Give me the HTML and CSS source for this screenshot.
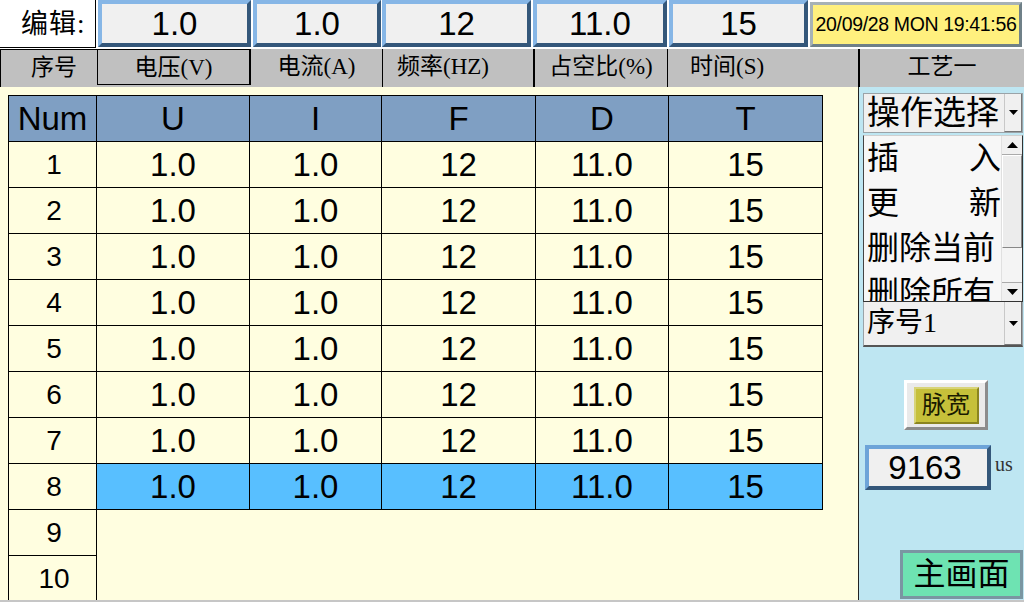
FILE: index.html
```html
<!DOCTYPE html>
<html lang="zh-CN">
<head>
<meta charset="utf-8">
<title>工艺编辑</title>
<link rel="stylesheet" href="styles.css">
</head>
<body>
<div class="screen">
  <div class="topbar">
    <div class="edit-label">编辑:</div>
    <div class="val-box vb1">1.0</div>
    <div class="val-box vb2">1.0</div>
    <div class="val-box vb3">12</div>
    <div class="val-box vb4">11.0</div>
    <div class="val-box vb5">15</div>
    <div class="clock">20/09/28 MON 19:41:56</div>
  </div>
  <div class="headbar">
    <div class="hcell h-seq">序号</div>
    <div class="hcell h-u">电压(V)</div>
    <div class="hcell h-i">电流(A)</div>
    <div class="hcell h-f">频率(HZ)</div>
    <div class="hcell h-d">占空比(%)</div>
    <div class="hcell h-t">时间(S)</div>
    <div class="hcell h-proc">工艺一</div>
  </div>
  <div class="main">
    <section class="panel">
      <table class="grid">
        <colgroup>
          <col class="c-num"><col class="c-u"><col class="c-i"><col class="c-f"><col class="c-d"><col class="c-t">
        </colgroup>
        <thead>
          <tr><th class="num-h">Num</th><th>U</th><th>I</th><th>F</th><th>D</th><th>T</th></tr>
        </thead>
        <tbody>
          <tr><td class="num">1</td><td>1.0</td><td>1.0</td><td>12</td><td>11.0</td><td>15</td></tr>
          <tr><td class="num">2</td><td>1.0</td><td>1.0</td><td>12</td><td>11.0</td><td>15</td></tr>
          <tr><td class="num">3</td><td>1.0</td><td>1.0</td><td>12</td><td>11.0</td><td>15</td></tr>
          <tr><td class="num">4</td><td>1.0</td><td>1.0</td><td>12</td><td>11.0</td><td>15</td></tr>
          <tr><td class="num">5</td><td>1.0</td><td>1.0</td><td>12</td><td>11.0</td><td>15</td></tr>
          <tr><td class="num">6</td><td>1.0</td><td>1.0</td><td>12</td><td>11.0</td><td>15</td></tr>
          <tr><td class="num">7</td><td>1.0</td><td>1.0</td><td>12</td><td>11.0</td><td>15</td></tr>
          <tr class="sel"><td class="num">8</td><td>1.0</td><td>1.0</td><td>12</td><td>11.0</td><td>15</td></tr>
          <tr><td class="num">9</td><td class="void"></td><td class="void"></td><td class="void"></td><td class="void"></td><td class="void"></td></tr>
          <tr><td class="num">10</td><td class="void"></td><td class="void"></td><td class="void"></td><td class="void"></td><td class="void"></td></tr>
        </tbody>
      </table>
    </section>
    <aside class="side">
      <div class="combo combo-op">
        <span class="combo-text">操作选择</span>
        <span class="drop-btn"><svg width="9" height="5" viewBox="0 0 9 5"><polygon points="0,0 9,0 4.5,5" fill="#000"/></svg></span>
      </div>
      <div class="listbox">
        <ul class="items">
          <li><span>插</span><span>入</span></li>
          <li><span>更</span><span>新</span></li>
          <li><span>删除当前</span></li>
          <li class="clipped"><span>删除所有</span></li>
        </ul>
        <div class="vscroll">
          <div class="sb-btn"><svg width="11" height="6" viewBox="0 0 11 6"><polygon points="0,6 11,6 5.5,0" fill="#000"/></svg></div>
          <div class="sb-thumb"></div>
          <div class="sb-track"></div>
          <div class="sb-btn"><svg width="11" height="6" viewBox="0 0 11 6"><polygon points="0,0 11,0 5.5,6" fill="#000"/></svg></div>
        </div>
      </div>
      <div class="combo combo-seq">
        <span class="combo-text">序号1</span>
        <span class="drop-btn"><svg width="9" height="5" viewBox="0 0 9 5"><polygon points="0,0 9,0 4.5,5" fill="#000"/></svg></span>
      </div>
      <div class="pulse-frame"><div class="pulse-btn">脉宽</div></div>
      <div class="pw-row">
        <div class="pw-input">9163</div>
        <span class="unit">us</span>
      </div>
      <div class="home-btn">主画面</div>
    </aside>
  </div>
</div>
</body>
</html>
```
FILE: styles.css
```css
html, body {
  margin: 0;
  padding: 0;
}
body {
  width: 1024px;
  height: 602px;
  overflow: hidden;
  background: #c6c6c6;
  font-family: "Liberation Sans", Arial, sans-serif;
  color: #000;
}
.screen {
  width: 1024px;
  height: 600px;
  display: flex;
  flex-direction: column;
  background: #ffffff;
}

/* ---------- top bar ---------- */
.topbar {
  display: flex;
  align-items: flex-start;
  height: 49px;
  background: #ffffff;
}
.edit-label {
  width: 96px;
  height: 48px;
  box-sizing: border-box;
  border-right: 1px solid #000;
  border-bottom: 1px solid #000;
  padding-left: 21px;
  font-family: "Liberation Serif", "Noto Sans CJK SC", serif;
  font-size: 27px;
  line-height: 48px;
  letter-spacing: 1px;
}
.val-box {
  height: 47px;
  box-sizing: border-box;
  border: 4px solid;
  border-color: #86b6e6 #34577a #34577a #86b6e6;
  background: #f0f0f0;
  font-size: 33px;
  line-height: 39px;
  text-align: center;
}
.vb1 { width: 153px; margin-left: 2px; }
.vb2 { width: 128px; margin-left: 2px; }
.vb3 { width: 149px; margin-left: 1px; }
.vb4 { width: 134px; margin-left: 2px; }
.vb5 { width: 139px; margin-left: 2px; }
.clock {
  width: 212px;
  height: 45px;
  margin-left: 2px;
  margin-top: 2px;
  box-sizing: border-box;
  border: 3px solid;
  border-color: #a7b2b6 #6f8088 #6f8088 #a7b2b6;
  background: #fff07e;
  font-size: 19.5px;
  line-height: 39px;
  text-align: center;
  white-space: nowrap;
  letter-spacing: -0.35px;
}

/* ---------- header bar ---------- */
.headbar {
  display: flex;
  height: 38px;
  background: #c0c0c0;
}
.hcell {
  box-sizing: border-box;
  height: 38px;
  border-right: 2px solid #000;
  font-family: "Liberation Serif", "Noto Sans CJK SC", serif;
  font-size: 23px;
  line-height: 36px;
  text-align: center;
  white-space: nowrap;
}
.h-seq { width: 97px; border-top: 1px solid #000; border-left: 1px solid #000; border-right: none; padding-left: 10px; }
.h-u { width: 154px; border: 1px solid #000; border-right-width: 2px; height: 36px; }
.h-i { width: 132px; border-right-width: 1px; }
.h-f { width: 152px; text-align: left; padding-left: 14px; }
.h-d { width: 133px; border-right-width: 1px; }
.h-t { width: 192px; text-align: left; padding-left: 22px; }
.h-proc { width: 164px; border-right: none; }

/* ---------- main ---------- */
.main {
  display: flex;
  height: 513px;
  overflow: hidden;
}
.panel {
  flex: none;
  width: 859px;
  box-sizing: border-box;
  border-right: 1px solid #222;
  background: #fffee0;
  padding: 8px 0 0 8px;
}
.grid {
  border-collapse: collapse;
  table-layout: fixed;
  width: 814px;
}
.c-num { width: 88px; }
.c-u { width: 153px; }
.c-i { width: 132px; }
.c-f { width: 154px; }
.c-d { width: 133px; }
.c-t { width: 154px; }
.grid th,
.grid td {
  border: 1px solid #000;
  height: 45px;
  padding: 0;
  text-align: center;
  vertical-align: middle;
  font-size: 33px;
  font-weight: normal;
  line-height: 44px;
}
.grid th {
  background: #7f9fc3;
}
.grid td.num {
  font-size: 28px;
  padding-left: 3px;
}
.grid tr.sel td:not(.num) {
  background: #58bfff;
}
.grid td.void {
  border: none;
}

/* ---------- side panel ---------- */
.side {
  flex: 1;
  background: #bee6f2;
  display: flex;
  flex-direction: column;
  align-items: flex-start;
  font-family: "Liberation Serif", "Noto Sans CJK SC", serif;
}
.combo {
  width: 160px;
  margin-left: 4px;
  box-sizing: border-box;
  background: #f0f0f0;
  display: flex;
  align-items: stretch;
  border: 1px solid #9aa3a8;
}
.combo-op {
  margin-top: 6px;
  height: 40px;
}
.combo-seq {
  height: 45px;
  border-top: none;
  border-bottom: 2px solid #555;
}
.combo-text {
  flex: 1;
  padding-left: 3px;
  white-space: nowrap;
  overflow: hidden;
}
.combo-op .combo-text {
  font-size: 33px;
  line-height: 38px;
}
.combo-seq .combo-text {
  font-size: 28px;
  line-height: 42px;
}
.drop-btn {
  width: 18px;
  box-sizing: border-box;
  border-left: 1px solid #c8c8c8;
  border-right: 1px solid #777;
  border-bottom: 1px solid #777;
  display: flex;
  align-items: center;
  justify-content: center;
  background: #f0f0f0;
}
.listbox {
  width: 160px;
  height: 167px;
  margin-left: 4px;
  margin-top: 2px;
  box-sizing: border-box;
  border: 1px solid #333;
  border-top-color: #d0d0d0;
  border-left-color: #444;
  background: #f7f7f7;
  display: flex;
  overflow: hidden;
}
.items {
  list-style: none;
  margin: 0;
  padding: 0 0 0 3px;
  flex: 1;
  height: 165px;
  overflow: hidden;
}
.items li {
  height: 45px;
  width: 134px;
  display: flex;
  justify-content: space-between;
  font-size: 32px;
  line-height: 45px;
  white-space: nowrap;
}
.items li.clipped {
  height: 30px;
  overflow: hidden;
}
.vscroll {
  width: 20px;
  display: flex;
  flex-direction: column;
  background: #f0f0f0;
  border-left: 1px solid #e0e0e0;
}
.sb-btn {
  height: 18px;
  display: flex;
  align-items: center;
  justify-content: center;
  background: #f0f0f0;
  border-bottom: 1px solid #aaa;
}
.sb-btn:last-child {
  border-bottom: none;
  border-top: 1px solid #aaa;
}
.sb-thumb {
  height: 93px;
  box-sizing: border-box;
  border: 1px solid #888;
  border-top-color: #fff;
  border-left-color: #fff;
  background: #ececec;
}
.sb-track {
  flex: 1;
  background: #f4f4f4;
}
.pulse-frame {
  margin-top: 33px;
  margin-left: 45px;
  width: 84px;
  height: 50px;
  box-sizing: border-box;
  border: 3px solid;
  border-color: #ffffff #8c8c8c #8c8c8c #ffffff;
  background: #eaeaea;
  display: flex;
  align-items: center;
  justify-content: center;
}
.pulse-btn {
  width: 65px;
  height: 37px;
  box-sizing: border-box;
  border: 2px solid;
  border-color: #d8d478 #8a8420 #8a8420 #d8d478;
  background: #c6c03a;
  font-size: 24px;
  line-height: 33px;
  text-align: center;
  color: #1a1a00;
}
.pw-row {
  margin-top: 15px;
  margin-left: 6px;
  display: flex;
  align-items: center;
}
.pw-input {
  width: 126px;
  height: 45px;
  box-sizing: border-box;
  border: 4px solid;
  border-color: #6ea4d8 #34577a #34577a #6ea4d8;
  background: #f0f0f0;
  font-family: "Liberation Sans", Arial, sans-serif;
  font-size: 33px;
  line-height: 37px;
  text-align: center;
  padding-right: 6px;
}
.unit {
  margin-left: 4px;
  font-size: 20px;
  color: #333;
  margin-top: -6px;
}
.home-btn {
  margin-top: 60px;
  margin-left: 41px;
  width: 123px;
  height: 49px;
  box-sizing: border-box;
  border: 3px solid #7a96a2;
  background: #6ee3b2;
  font-size: 32px;
  line-height: 43px;
  text-align: center;
}
```
